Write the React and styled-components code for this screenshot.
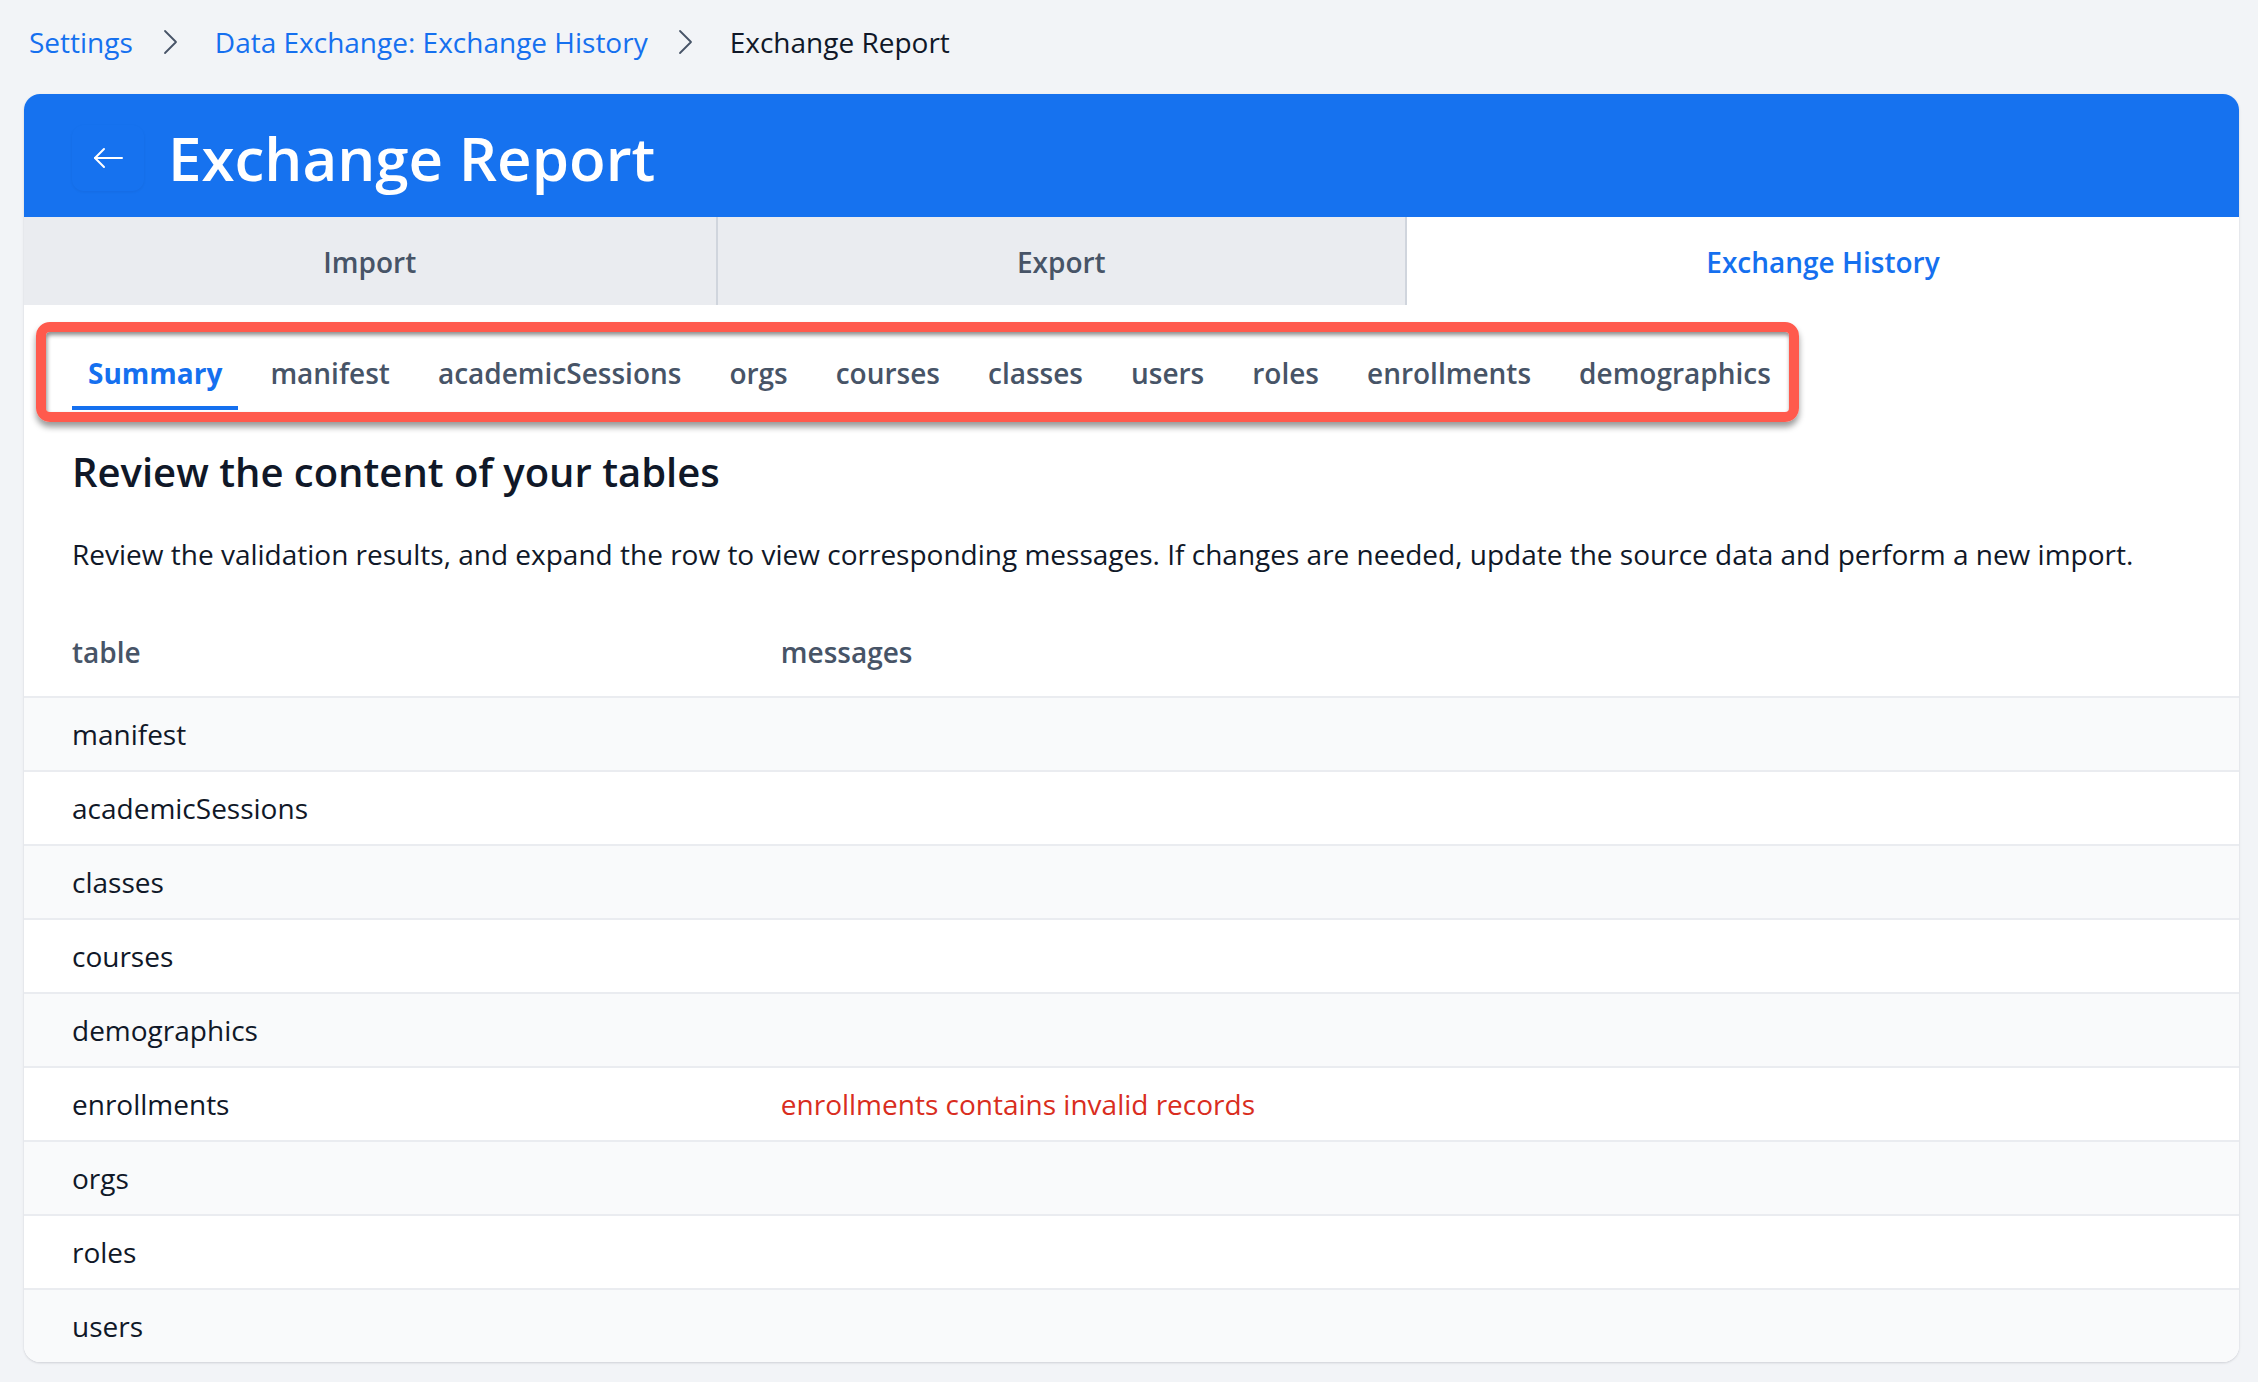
import React from 'react';
import styled, { createGlobalStyle } from 'styled-components';

const GlobalStyle = createGlobalStyle`
  html, body {
    margin: 0;
    padding: 0;
    background: #f2f4f7;
    font-family: 'Open Sans', 'Liberation Sans', sans-serif;
    -webkit-font-smoothing: antialiased;
  }
  * { box-sizing: border-box; }
`;

const tables = [
  { name: 'manifest' },
  { name: 'academicSessions' },
  { name: 'classes' },
  { name: 'courses' },
  { name: 'demographics' },
  { name: 'enrollments', message: 'enrollments contains invalid records' },
  { name: 'orgs' },
  { name: 'roles' },
  { name: 'users' }
];

const subTabs = [
  'Summary',
  'manifest',
  'academicSessions',
  'orgs',
  'courses',
  'classes',
  'users',
  'roles',
  'enrollments',
  'demographics'
];

function Chevron() {
  return (
    <ChevronIcon width="16" height="26" viewBox="0 0 16 26">
      <polyline points="2,2 13,13 2,24" />
    </ChevronIcon>
  );
}

export default function App() {
  return (
    <Page>
      <GlobalStyle />
      <Breadcrumb>
        <Crumb href="#">Settings</Crumb>
        <Chevron />
        <Crumb href="#">Data Exchange: Exchange History</Crumb>
        <Chevron />
        <Current>Exchange Report</Current>
      </Breadcrumb>

      <Card>
        <Header>
          <BackButton aria-label="back">
            <svg width="30" height="22" viewBox="0 0 30 22">
              <line x1="2" y1="11" x2="29" y2="11" />
              <polyline points="11,2 2,11 11,20" />
            </svg>
          </BackButton>
          <Title>Exchange Report</Title>
        </Header>

        <TopTabs>
          <TopTab>Import</TopTab>
          <TopTab>Export</TopTab>
          <TopTab active>Exchange History</TopTab>
        </TopTabs>

        <Body>
          <SubNav>
            {subTabs.map((tab, i) => (
              <SubTab key={tab} active={i === 0}>
                {tab}
              </SubTab>
            ))}
            <Annotation />
          </SubNav>
          <Heading>Review the content of your tables</Heading>
          <Intro>
            Review the validation results, and expand the row to view corresponding messages. If
            changes are needed, update the source data and perform a new import.
          </Intro>
        </Body>

        <Table>
          <HeadRow>
            <HeadCell>table</HeadCell>
            <HeadCell>messages</HeadCell>
          </HeadRow>
          {tables.map((row, i) => (
            <Row key={row.name} striped={i % 2 === 0}>
              <Cell>{row.name}</Cell>
              <Cell error>{row.message}</Cell>
            </Row>
          ))}
        </Table>
      </Card>
    </Page>
  );
}

const Page = styled.div`
  padding: 0 19px 21px 24px;
  min-height: 100vh;
`;

const Breadcrumb = styled.nav`
  display: flex;
  align-items: center;
  padding: 23px 5px 0;
  font-size: 28px;
  line-height: 38px;
`;

const Crumb = styled.a`
  color: #1570ef;
  text-decoration: none;
`;

const Current = styled.span`
  color: #101828;
`;

const ChevronIcon = styled.svg`
  margin: 0 36px 0 30px;
  fill: none;
  stroke: #475467;
  stroke-width: 1.8;
  stroke-linecap: round;
  stroke-linejoin: round;
`;

const Card = styled.div`
  margin-top: 33px;
  background: #fff;
  border-radius: 16px;
  overflow: hidden;
  box-shadow: 0 1px 3px rgba(16, 24, 40, 0.1), 0 1px 2px rgba(16, 24, 40, 0.06);
`;

const Header = styled.div`
  display: flex;
  align-items: center;
  height: 123px;
  padding: 4px 48px 0;
  background: #1672ef;
`;

const BackButton = styled.button`
  display: flex;
  align-items: center;
  justify-content: center;
  width: 72px;
  height: 66px;
  margin-right: 24px;
  padding: 0;
  border: none;
  border-radius: 12px;
  background: transparent;
  box-shadow: 0 1px 3px rgba(16, 24, 40, 0.06);
  cursor: pointer;

  svg {
    fill: none;
    stroke: #fff;
    stroke-width: 2;
    stroke-linecap: round;
    stroke-linejoin: round;
  }
`;

const Title = styled.h1`
  margin: 0;
  color: #fff;
  font-size: 60px;
  font-weight: 600;
  line-height: 1.2;
`;

const TopTabs = styled.div`
  display: flex;
  height: 88px;
`;

const TopTab = styled.div`
  flex: 1 1 auto;
  display: flex;
  align-items: center;
  justify-content: center;
  padding-top: 2px;
  font-size: 28px;
  font-weight: 600;
  color: ${(p) => (p.active ? '#1570ef' : '#475467')};
  background: ${(p) => (p.active ? '#fff' : '#eaecf0')};

  & + & {
    border-left: 2px solid #d0d5dd;
  }
`;

const Body = styled.div`
  padding: 35px 48px 0;
`;

const SubNav = styled.div`
  position: relative;
  display: flex;
  gap: 16px;
  width: fit-content;
`;

const SubTab = styled.div`
  padding: 14px 16px;
  font-size: 28px;
  line-height: 38px;
  font-weight: ${(p) => (p.active ? 700 : 600)};
  color: ${(p) => (p.active ? '#1570ef' : '#475467')};
  border-bottom: 4px solid ${(p) => (p.active ? '#1570ef' : 'transparent')};
`;

const Annotation = styled.span`
  position: absolute;
  left: -36px;
  top: -18px;
  right: -12px;
  bottom: -12px;
  border: 10px solid #ff5a4d;
  border-radius: 14px;
  pointer-events: none;
  box-shadow: 0 5px 6px rgba(0, 0, 0, 0.4), inset 1px 3px 4px rgba(0, 0, 0, 0.45);
`;

const Heading = styled.h2`
  margin: 36px 0 0;
  font-size: 40px;
  line-height: 52px;
  font-weight: 600;
  color: #101828;
`;

const Intro = styled.p`
  margin: 37px 0 0;
  font-size: 28px;
  line-height: 38px;
  color: #101828;
`;

const Table = styled.div`
  margin-top: 36px;
`;

const HeadRow = styled.div`
  display: grid;
  grid-template-columns: 32% 1fr;
  padding: 24px 0 25px;
`;

const HeadCell = styled.div`
  padding: 0 48px;
  font-size: 28px;
  line-height: 38px;
  font-weight: 600;
  color: #475467;
`;

const Row = styled.div`
  display: grid;
  grid-template-columns: 32% 1fr;
  align-items: center;
  height: 74px;
  border-top: 2px solid #eaecf0;
  background: ${(p) => (p.striped ? '#f9fafb' : '#fff')};
`;

const Cell = styled.div`
  padding: 0 48px;
  font-size: 28px;
  line-height: 38px;
  color: ${(p) => (p.error ? '#d92d20' : '#101828')};
`;
